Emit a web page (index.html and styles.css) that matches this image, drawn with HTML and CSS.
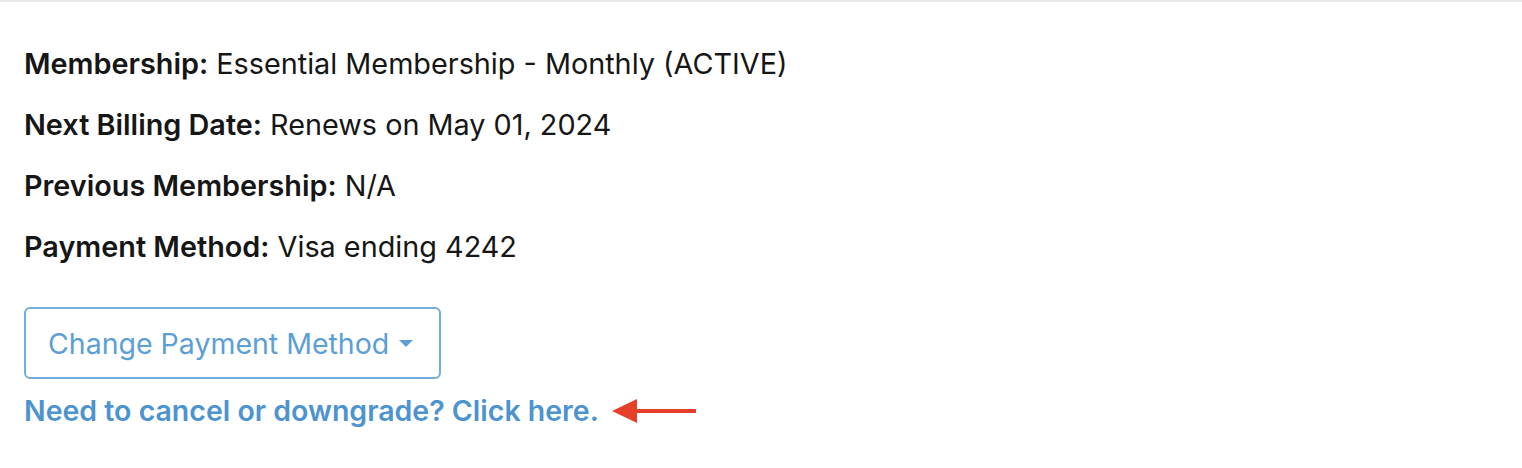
FILE: index.html
```html
<!DOCTYPE html>
<html lang="en">
<head>
    <meta charset="UTF-8">
    <meta name="viewport" content="width=device-width, initial-scale=1.0">
    <title>Membership</title>
    <link rel="stylesheet" href="styles.css">
</head>
<body>
    <div class="account">
        <div class="details">
            <p class="row"><span class="label">Membership:</span> Essential Membership - Monthly (ACTIVE)</p>
            <p class="row"><span class="label">Next Billing Date:</span> Renews on May 01, 2024</p>
            <p class="row"><span class="label">Previous Membership:</span> N/A</p>
            <p class="row"><span class="label">Payment Method:</span> Visa ending 4242</p>
        </div>
        <div class="actions">
            <button class="pay-btn">Change Payment Method <span class="caret"></span></button>
            <div class="cancel-line">
                <a class="cancel-link" href="#">Need to cancel or downgrade? Click here.</a>
                <svg class="arrow" width="84" height="26" viewBox="0 0 84 26">
                    <path d="M0 13 L25 1 L25 25 Z" fill="#e6402b"/>
                    <rect x="22" y="11" width="62" height="4" fill="#e6402b"/>
                </svg>
            </div>
        </div>
    </div>
</body>
</html>
```

FILE: styles.css
```css
body {
    margin: 0;
    padding: 0;
    background-color: #fff;
    font-family: Inter, "Open Sans", sans-serif;
    color: #161616;
}
.account {
    border-top: 2px solid #e8e8e8;
    padding: 44px 24px 0 24px;
}
.details {
    display: flex;
    flex-direction: column;
    gap: 25px;
}
.row {
    margin: 0;
    font-size: 28.8px;
    line-height: 36px;
}
.label {
    font-weight: 600;
}
.actions {
    margin-top: 42px;
    display: flex;
    flex-direction: column;
    align-items: flex-start;
}
.pay-btn {
    font-family: inherit;
    font-size: 28.5px;
    color: #5b9fd6;
    background: #fff;
    border: 2px solid #74acdd;
    border-radius: 6px;
    height: 72px;
    padding: 0 26px 0 22px;
    display: flex;
    align-items: center;
    gap: 10px;
    cursor: pointer;
}
.caret {
    width: 0;
    height: 0;
    border-left: 7px solid transparent;
    border-right: 7px solid transparent;
    border-top: 7px solid #5b9fd6;
}
.cancel-line {
    margin-top: 14px;
    display: flex;
    align-items: center;
    gap: 13px;
}
.cancel-link {
    font-size: 28.5px;
    font-weight: 600;
    color: #4d94cf;
    text-decoration: none;
}
```
